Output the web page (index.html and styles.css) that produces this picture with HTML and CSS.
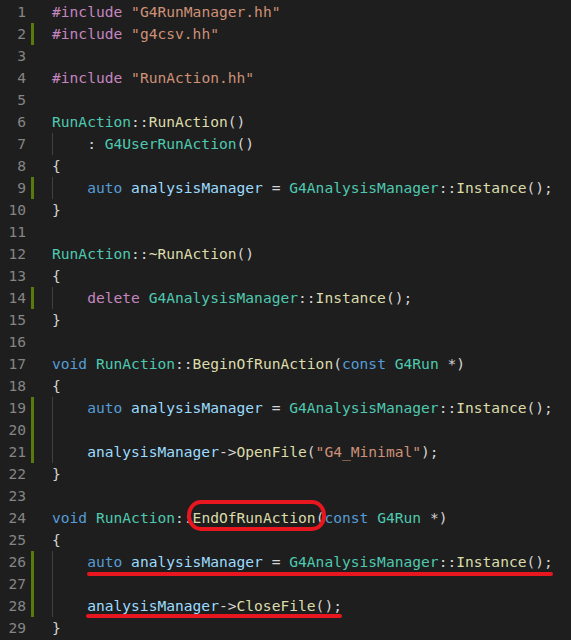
FILE: index.html
```html
<!DOCTYPE html>
<html lang="en">
<head>
    <meta charset="UTF-8">
    <title>RunAction.cc</title>
    <link rel="stylesheet" href="styles.css">
</head>
<body>
    <div class="editor">
        <div class="line"><span class="ln">1</span><span class="mark"></span><span class="code"><span class="pp">#include</span> <span class="str">"G4RunManager.hh"</span></span></div>
        <div class="line"><span class="ln">2</span><span class="mark added"></span><span class="code"><span class="pp">#include</span> <span class="str">"g4csv.hh"</span></span></div>
        <div class="line"><span class="ln">3</span><span class="mark"></span><span class="code"></span></div>
        <div class="line"><span class="ln">4</span><span class="mark"></span><span class="code"><span class="pp">#include</span> <span class="str">"RunAction.hh"</span></span></div>
        <div class="line"><span class="ln">5</span><span class="mark"></span><span class="code"></span></div>
        <div class="line"><span class="ln">6</span><span class="mark"></span><span class="code"><span class="type">RunAction</span>::<span class="fn">RunAction</span>()</span></div>
        <div class="line"><span class="ln">7</span><span class="mark"></span><span class="code"><span class="indent"></span>: <span class="type">G4UserRunAction</span>()</span></div>
        <div class="line"><span class="ln">8</span><span class="mark"></span><span class="code">{</span></div>
        <div class="line"><span class="ln">9</span><span class="mark added"></span><span class="code"><span class="indent"></span><span class="kw">auto</span> <span class="var">analysisManager</span> = <span class="type">G4AnalysisManager</span>::<span class="fn">Instance</span>();</span></div>
        <div class="line"><span class="ln">10</span><span class="mark"></span><span class="code">}</span></div>
        <div class="line"><span class="ln">11</span><span class="mark"></span><span class="code"></span></div>
        <div class="line"><span class="ln">12</span><span class="mark"></span><span class="code"><span class="type">RunAction</span>::<span class="fn">~RunAction</span>()</span></div>
        <div class="line"><span class="ln">13</span><span class="mark"></span><span class="code">{</span></div>
        <div class="line"><span class="ln">14</span><span class="mark added"></span><span class="code"><span class="indent"></span><span class="ctl">delete</span> <span class="type">G4AnalysisManager</span>::<span class="fn">Instance</span>();</span></div>
        <div class="line"><span class="ln">15</span><span class="mark"></span><span class="code">}</span></div>
        <div class="line"><span class="ln">16</span><span class="mark"></span><span class="code"></span></div>
        <div class="line"><span class="ln">17</span><span class="mark"></span><span class="code"><span class="kw">void</span> <span class="type">RunAction</span>::<span class="fn">BeginOfRunAction</span>(<span class="kw">const</span> <span class="type">G4Run</span> *)</span></div>
        <div class="line"><span class="ln">18</span><span class="mark"></span><span class="code">{</span></div>
        <div class="line"><span class="ln">19</span><span class="mark added"></span><span class="code"><span class="indent"></span><span class="kw">auto</span> <span class="var">analysisManager</span> = <span class="type">G4AnalysisManager</span>::<span class="fn">Instance</span>();</span></div>
        <div class="line"><span class="ln">20</span><span class="mark added"></span><span class="code"><span class="indent"></span></span></div>
        <div class="line"><span class="ln">21</span><span class="mark added"></span><span class="code"><span class="indent"></span><span class="var">analysisManager</span>-&gt;<span class="fn">OpenFile</span>(<span class="str">"G4_Minimal"</span>);</span></div>
        <div class="line"><span class="ln">22</span><span class="mark"></span><span class="code">}</span></div>
        <div class="line"><span class="ln">23</span><span class="mark"></span><span class="code"></span></div>
        <div class="line"><span class="ln">24</span><span class="mark"></span><span class="code"><span class="kw">void</span> <span class="type">RunAction</span>::<span class="circled"><span class="fn">EndOfRunAction</span>(</span><span class="kw">const</span> <span class="type">G4Run</span> *)</span></div>
        <div class="line"><span class="ln">25</span><span class="mark"></span><span class="code">{</span></div>
        <div class="line"><span class="ln">26</span><span class="mark added"></span><span class="code"><span class="indent"></span><span class="underlined first"><span class="kw">auto</span> <span class="var">analysisManager</span> = <span class="type">G4AnalysisManager</span>::<span class="fn">Instance</span>();</span></span></div>
        <div class="line"><span class="ln">27</span><span class="mark added"></span><span class="code"><span class="indent"></span></span></div>
        <div class="line"><span class="ln">28</span><span class="mark added"></span><span class="code"><span class="indent"></span><span class="underlined second"><span class="var">analysisManager</span>-&gt;<span class="fn">CloseFile</span>();</span></span></div>
        <div class="line"><span class="ln">29</span><span class="mark"></span><span class="code">}</span></div>
    </div>
</body>
</html>
```

FILE: styles.css
```css
/* Editor (VS Code Dark+) */
:root {
    --bg: #1e1e1e;
    --text: #d4d4d4;
    --line-number: #858585;
    --added: #587c0c;
    --guide: #404040;
    --ink: #e8161e;
}

html, body {
    margin: 0;
    padding: 0;
    background: var(--bg);
    height: 640px;
    overflow: hidden;
}

.editor {
    padding-top: 1px;
    font-family: "DejaVu Sans Mono", "Liberation Mono", monospace;
    font-size: 14.6px;
    color: var(--text);
}

.line {
    display: flex;
    height: 22px;
    line-height: 22px;
    white-space: pre;
}

.ln {
    width: 26px;
    text-align: right;
    color: var(--line-number);
}

.mark {
    width: 3px;
    margin: 0 18px 0 5px;
}

.mark.added {
    background: var(--added);
}

.code {
    display: block;
    height: 22px;
}

.indent {
    display: inline-block;
    width: 4ch;
    height: 22px;
    vertical-align: top;
    box-shadow: inset 1px 0 var(--guide);
}

/* Tokens */
.pp, .ctl { color: #c586c0; }
.str { color: #ce9178; }
.type { color: #4ec9b0; }
.fn { color: #dcdcaa; }
.kw { color: #569cd6; }
.var { color: #9cdcfe; }

/* Red markup drawn on the screenshot */
.circled, .underlined {
    position: relative;
    display: inline-block;
    height: 22px;
    vertical-align: top;
}

.circled::after {
    content: "";
    position: absolute;
    left: -6px;
    right: -2px;
    top: -7px;
    bottom: -2px;
    border: 4px solid var(--ink);
    border-radius: 14px / 15px;
}

.underlined::after {
    content: "";
    position: absolute;
    left: 0;
    right: 0;
    height: 4px;
    border-radius: 2px;
    background: var(--ink);
}

.underlined.first::after {
    bottom: -3px;
}

.underlined.second::after {
    left: -1px;
    bottom: -1px;
}
```
